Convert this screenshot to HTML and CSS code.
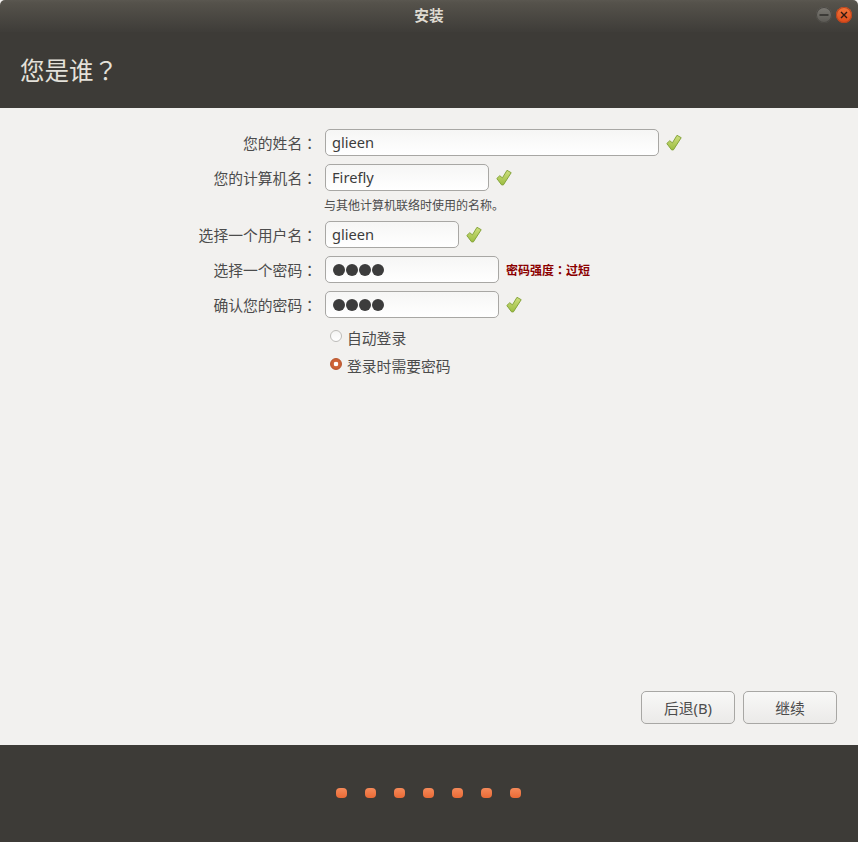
FILE: index.html
```html
<!DOCTYPE html>
<html lang="zh">
<head>
<meta charset="utf-8">
<title>安装</title>
<link rel="stylesheet" href="styles.css">
</head>
<body>
<svg class="defs" width="0" height="0" aria-hidden="true">
  <defs>
    <linearGradient id="cg" x1="0" y1="0" x2="0" y2="1">
      <stop offset="0" stop-color="#cfe07f"/>
      <stop offset="1" stop-color="#9dbd42"/>
    </linearGradient>
    <symbol id="check" viewBox="0 0 16 16">
      <path d="M0.8 9 L3.8 6.2 L6.4 8.4 L11 0.8 L15.2 3.2 L7.4 15.4 L5.6 15.4 Z" fill="url(#cg)" stroke="#86a53c" stroke-width="1" stroke-linejoin="round"/>
    </symbol>
  </defs>
</svg>
<div class="window">
  <header class="titlebar">
    <span class="titlebar-text">安装</span>
    <div class="winbtns">
      <span class="winbtn min"><svg width="10" height="10" viewBox="0 0 10 10"><path d="M0.5 5H9.5" stroke="#2e2d2a" stroke-width="1.3"/></svg></span>
      <span class="winbtn close"><svg width="10" height="10" viewBox="0 0 10 10"><path d="M2 2L8 8M8 2L2 8" stroke="#2e1a12" stroke-width="1.4"/></svg></span>
    </div>
  </header>
  <div class="heading"><h1>您是谁<span class="punct" lang="zh-TW">？</span></h1></div>
  <main class="content">
    <form class="form">
      <div class="row">
        <label class="label">您的姓名<span class="punct" lang="zh-TW">：</span></label>
        <div class="input w-name">glieen</div>
        <svg class="ok"><use href="#check"/></svg>
      </div>
      <div class="row">
        <label class="label">您的计算机名<span class="punct" lang="zh-TW">：</span></label>
        <div class="input w-host">Firefly</div>
        <svg class="ok"><use href="#check"/></svg>
      </div>
      <p class="hint">与其他计算机联络时使用的名称。</p>
      <div class="row">
        <label class="label">选择一个用户名<span class="punct" lang="zh-TW">：</span></label>
        <div class="input w-user">glieen</div>
        <svg class="ok"><use href="#check"/></svg>
      </div>
      <div class="row">
        <label class="label">选择一个密码<span class="punct" lang="zh-TW">：</span></label>
        <div class="input w-pass dots"><i></i><i></i><i></i><i></i></div>
        <span class="strength">密码强度<span class="punct" lang="zh-TW">：</span>过短</span>
      </div>
      <div class="row">
        <label class="label">确认您的密码<span class="punct" lang="zh-TW">：</span></label>
        <div class="input w-pass dots"><i></i><i></i><i></i><i></i></div>
        <svg class="ok"><use href="#check"/></svg>
      </div>
      <div class="radios">
        <div class="radio-row"><span class="radio"></span><span>自动登录</span></div>
        <div class="radio-row"><span class="radio on"></span><span>登录时需要密码</span></div>
      </div>
    </form>
    <div class="actions">
      <button type="button" class="btn">后退(B)</button>
      <button type="button" class="btn">继续</button>
    </div>
  </main>
  <footer class="progress">
    <span class="dot"></span><span class="dot"></span><span class="dot"></span><span class="dot"></span><span class="dot"></span><span class="dot"></span><span class="dot"></span>
  </footer>
</div>
</body>
</html>
```

FILE: styles.css
```css
* { box-sizing: border-box; }
html, body { margin: 0; padding: 0; height: 100%; background: #f4f2f0; }
body {
  font-family: "Noto Sans", "Noto Sans CJK SC", sans-serif;
  font-size: 14.8px;
  color: #4c4c4c;
  overflow: hidden;
}
.defs { position: absolute; }
.punct { font-family: "Noto Sans CJK TC", "Noto Sans CJK JP", sans-serif; }
.window {
  width: 858px;
  height: 842px;
  display: flex;
  flex-direction: column;
  border-radius: 5px 5px 0 0;
  overflow: hidden;
  background: #f2f1ef;
}
.titlebar {
  height: 32px;
  flex: none;
  position: relative;
  display: flex;
  align-items: center;
  justify-content: center;
  background: linear-gradient(#5a5750 0, #55524b 3px, #3f3d39 31px);
  color: #dfdbd2;
  font-weight: 700;
  font-size: 14.67px;
}
.titlebar-text { margin-top: -3px; }
.winbtns {
  position: absolute;
  top: 7px;
  right: 6px;
  display: flex;
  gap: 4px;
}
.winbtn {
  width: 16px;
  height: 16px;
  border-radius: 50%;
  display: flex;
  align-items: center;
  justify-content: center;
}
.winbtn.min { background: linear-gradient(#7b7973, #5a5853); box-shadow: inset 0 0 0 1px #4a4843; }
.winbtn.close { background: linear-gradient(#f2763a, #dd4a1a); box-shadow: inset 0 0 0 1px #b8441d; }
.heading {
  height: 76px;
  flex: none;
  background: #3d3b37;
  padding-left: 20px;
}
.heading h1 {
  margin: 0;
  font-size: 24.5px;
  line-height: 34px;
  padding-top: 21px;
  font-weight: 400;
  color: #e4e1da;
}
.content {
  flex: 1;
  display: flex;
  flex-direction: column;
  padding: 21px 21px 21px 0;
  min-height: 0;
}
.form { flex: 1; display: flex; flex-direction: column; gap: 8px; }
.row { display: flex; align-items: center; height: 27px; }
.label {
  width: 317px;
  text-align: right;
  flex: none;
  margin-right: 8px;
}
.input {
  height: 27px;
  border: 1px solid #a8a7a4;
  border-radius: 5px;
  background: linear-gradient(#f6f6f5, #ffffff);
  padding-left: 6px;
  line-height: 25px;
  color: #3c3c3c;
  font-size: 14.67px;
  flex: none;
}
.w-name { width: 334px; }
.w-host { width: 164px; }
.w-user { width: 134px; }
.w-pass { width: 174px; }
.dots { display: flex; align-items: center; gap: 1px; padding-left: 7px; }
.dots i { width: 12px; height: 12px; border-radius: 50%; background: #3c3c3c; display: block; }
.ok { width: 16px; height: 17px; margin-left: 7px; flex: none; }
.hint {
  margin: 0 0 0 324px;
  height: 14px;
  font-size: 12px;
  line-height: 14px;
  color: #4c4c4c;
}
.strength { margin-left: 7px; font-size: 12px; font-weight: 700; color: #8b0000; }
.radios { margin: 1px 0 0 330px; display: flex; flex-direction: column; gap: 8px; }
.radio-row { display: flex; align-items: center; height: 20px; gap: 5px; }
.radio {
  width: 12px;
  height: 12px;
  border-radius: 50%;
  border: 1px solid #bdbcb9;
  background: linear-gradient(#f4f4f3, #ffffff);
  flex: none;
  position: relative;
  top: -1px;
}
.radio.on {
  border-color: #b8552c;
  background: radial-gradient(circle, #ffffff 0 2px, #d0663a 2.6px, #c25a30 100%);
}
.actions { display: flex; justify-content: flex-end; gap: 8px; }
.btn {
  width: 94px;
  height: 33px;
  border: 1px solid #a8a7a4;
  border-radius: 5px;
  background: linear-gradient(#f8f8f7, #ebeae8);
  font: inherit;
  color: #4c4c4c;
  padding: 0;
}
.progress {
  height: 97px;
  flex: none;
  background: #3d3b37;
  display: flex;
  justify-content: center;
  gap: 18px;
  padding: 43px 1px 0 0;
}
.dot {
  width: 11px;
  height: 10px;
  border-radius: 4px;
  background: linear-gradient(#f58a5a, #ea6a35);
}
```
